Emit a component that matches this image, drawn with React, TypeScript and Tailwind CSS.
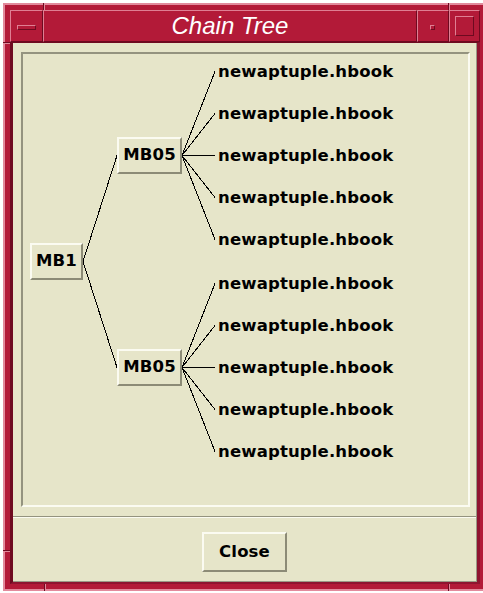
import React from 'react';

const LABEL_FONT = "font-['DejaVu_Sans',sans-serif] font-bold text-[16.5px] tracking-[0.15px] text-black";

// tree geometry, in px inside the etched frame
const MB1 = { left: 7, top: 189, w: 53, h: 37 };
const GROUPS = [
  { left: 94, top: 83, w: 65, h: 37 },
  { left: 94, top: 295, w: 65, h: 37 },
];
const LEAF_X = 195;
const LEAF_STEP = 42;

const MotifButton: React.FC<{ label: string; className?: string }> = ({ label, className = '' }) => (
  <div
    className={`flex items-center justify-center bg-[#e6e5c9] border-2 border-t-[#fbfbf1] border-l-[#fbfbf1] border-b-[#8c8b76] border-r-[#8c8b76] ${LABEL_FONT} ${className}`}
  >
    {label}
  </div>
);

const TitleSeg: React.FC<{ className?: string; children?: React.ReactNode }> = ({ className = '', children }) => (
  <div
    className={`h-full flex items-center justify-center bg-[#b31a38] border border-t-[#df7f93] border-l-[#df7f93] border-b-[#6e0a20] border-r-[#6e0a20] ${className}`}
  >
    {children}
  </div>
);

const ChainTree: React.FC = () => {
  const leaves = Array.from({ length: 10 }, (_, i) => i);
  return (
    <div className="relative w-full h-full">
      <svg className="absolute inset-0" width="100%" height="100%" shapeRendering="crispEdges">
        {GROUPS.map((g, gi) => {
          const cy = g.top + g.h / 2;
          return (
            <g key={gi} stroke="#000" strokeWidth="1">
              <line x1={MB1.left + MB1.w} y1={MB1.top + MB1.h / 2} x2={g.left} y2={cy} />
              {[-2, -1, 0, 1, 2].map((k) => (
                <line key={k} x1={g.left + g.w} y1={cy} x2={LEAF_X - 3} y2={cy + k * LEAF_STEP} />
              ))}
            </g>
          );
        })}
      </svg>

      <MotifButton label="MB1" className="absolute left-[7px] top-[189px] w-[53px] h-[37px]" />
      <MotifButton label="MB05" className="absolute left-[94px] top-[83px] w-[65px] h-[37px]" />
      <MotifButton label="MB05" className="absolute left-[94px] top-[295px] w-[65px] h-[37px]" />

      {leaves.map((i) => {
        const g = GROUPS[i < 5 ? 0 : 1];
        const cy = g.top + g.h / 2 + ((i % 5) - 2) * LEAF_STEP;
        return (
          <div
            key={i}
            className={`absolute h-[20px] leading-[20px] whitespace-nowrap ${LABEL_FONT}`}
            style={{ left: LEAF_X, top: cy - 10 }}
          >
            newaptuple.hbook
          </div>
        );
      })}
    </div>
  );
};

export default function App() {
  return (
    <div className="relative w-[483px] h-[593px] overflow-hidden bg-white">
      {/* window frame */}
      <div className="ml-[3px] mt-[3px] w-[484px] h-[588px] bg-[#b31a38] border-2 border-[#e28a9c] p-[5px] flex flex-col">
        {/* title bar */}
        <div className="h-[32px] flex">
          <TitleSeg className="w-[33px]">
            <div className="w-[19px] h-[5px] mt-[2px] bg-[#b31a38] border border-t-[#df7f93] border-l-[#df7f93] border-b-[#6e0a20] border-r-[#6e0a20]" />
          </TitleSeg>
          <TitleSeg className="flex-1">
            <span className="font-['Liberation_Sans',Arial,sans-serif] italic text-[24px] text-white leading-none">
              Chain Tree
            </span>
          </TitleSeg>
          <TitleSeg className="w-[32px]">
            <div className="w-[5px] h-[5px] mt-[3px] -ml-[2px] bg-[#b31a38] border border-t-[#df7f93] border-l-[#df7f93] border-b-[#6e0a20] border-r-[#6e0a20]" />
          </TitleSeg>
          <TitleSeg className="w-[31px]">
            <div className="w-[19px] h-[20px] bg-[#b31a38] border border-t-[#df7f93] border-l-[#df7f93] border-b-[#6e0a20] border-r-[#6e0a20]" />
          </TitleSeg>
        </div>

        {/* client area */}
        <div className="flex-1 flex border-t border-l-[3px] border-t-[#6e0a20] border-l-[#6e0a20] border-r-[3px] border-r-[#8f1430] border-b-2 border-b-[#8f1430]">
          <div className="flex-1 flex flex-col bg-[#e6e5c9] border-r border-b border-[#9a9986]">
            <div className="mt-[9px] ml-[8px] mr-[6px] h-[455px] border-2 border-t-[#94937f] border-l-[#94937f] border-b-[#fbfbf1] border-r-[#fbfbf1]">
              <ChainTree />
            </div>
            <div className="mt-[9px] h-[2px] border-t border-t-[#94937f] border-b border-b-[#fbfbf1]" />
            <div className="flex-1 flex justify-center pt-[14px]">
              <MotifButton label="Close" className="w-[85px] h-[40px]" />
            </div>
          </div>
        </div>
      </div>

      {/* resize-corner ticks on the frame */}
      <div className="absolute left-[43px] top-[3px] w-[2px] h-[7px] border-l border-l-[#6e0a20] border-r border-r-[#e28a9c]" />
      <div className="absolute left-[448px] top-[3px] w-[2px] h-[7px] border-l border-l-[#6e0a20] border-r border-r-[#e28a9c]" />
      <div className="absolute left-[44px] top-[584px] w-[2px] h-[7px] border-l border-l-[#6e0a20] border-r border-r-[#e28a9c]" />
      <div className="absolute left-[448px] top-[584px] w-[2px] h-[7px] border-l border-l-[#6e0a20] border-r border-r-[#e28a9c]" />
      <div className="absolute left-[3px] top-[42px] w-[7px] h-[2px] border-t border-t-[#6e0a20] border-b border-b-[#e28a9c]" />
      <div className="absolute left-[3px] top-[550px] w-[7px] h-[2px] border-t border-t-[#6e0a20] border-b border-b-[#e28a9c]" />
    </div>
  );
}
